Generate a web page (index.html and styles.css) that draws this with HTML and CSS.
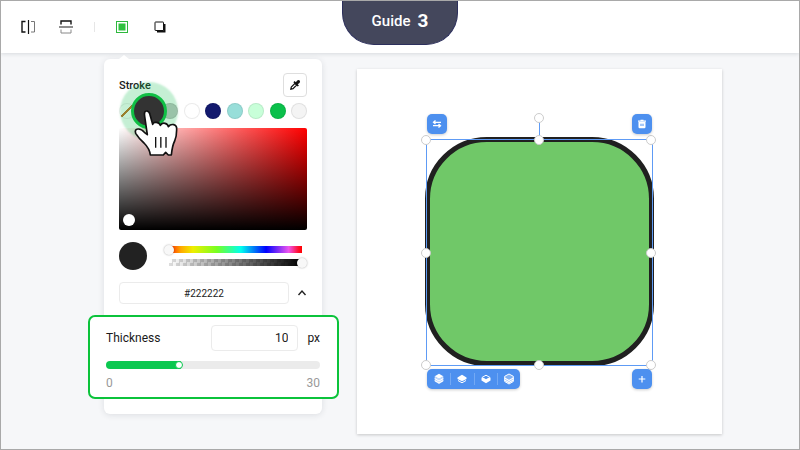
FILE: index.html
```html
<!DOCTYPE html>
<html lang="en">
<head>
<meta charset="utf-8">
<title>Guide 3</title>
<link rel="stylesheet" href="styles.css">
</head>
<body>
<header class="topbar">
  <button class="tool" aria-label="Flip horizontally">
    <svg width="16" height="16" viewBox="0 0 16 16" fill="none" stroke="#333"><path d="M5.500 2.500H2V13H5.500" stroke="#111" stroke-width="1.400"/><path d="M8.500 1V15" stroke="#111" stroke-width="1.200"/><path d="M11 2.500H14.500V13H11" stroke="#777"/></svg>
  </button>
  <button class="tool" aria-label="Flip vertically">
    <svg width="16" height="16" viewBox="0 0 16 16" fill="none"><path d="M3 5.500V2H13V5.500" stroke="#111" stroke-width="1.400"/><path d="M1 8H15" stroke="#444" stroke-width="1.200"/><path d="M3 10.500V14H13V10.500" stroke="#888"/></svg>
  </button>
  <span class="tool-divider"></span>
  <button class="tool" aria-label="Stroke">
    <svg width="16" height="16" viewBox="0 0 16 16"><rect x="2.500" y="2.500" width="11" height="11" fill="#fff" stroke="#2db83d"/><rect x="4.500" y="4.500" width="7" height="7" fill="#2fc13f"/></svg>
  </button>
  <button class="tool" aria-label="Shadow">
    <svg width="16" height="16" viewBox="0 0 16 16"><path d="M5 5H13.500V13.500H5Z" fill="#111"/><rect x="3" y="3" width="8.500" height="8.500" rx=".5" fill="#fff" stroke="#111"/></svg>
  </button>
  <h1 class="guide">Guide <strong>3</strong></h1>
</header>

<main class="workspace">
  <section class="panel">
    <div class="panel-head">
      <h2>Stroke</h2>
      <button class="eyedropper" aria-label="Pick a color">
        <svg width="12" height="12" viewBox="0 0 12 12"><path d="M1.800 10.200L2.300 8L6 4.300L7.700 6L4 9.700Z" fill="#fff" stroke="#111" stroke-width="1.200"/><path d="M5 2.700L9.300 7" stroke="#111" stroke-width="1.700"/><path d="M6.300 4L8.200 1.500Q9.500 .5 10.700 1.400Q11.500 2.600 10.500 3.900L8 5.700Z" fill="#111"/></svg>
      </button>
    </div>
    <div class="swatches">
      <button class="swatch none" aria-label="No color"></button>
      <button class="swatch current" aria-label="Dark gray">
        <svg class="hand" width="45" height="50" viewBox="75 100 135 150"><path d="M107 125Q104 108 114 109Q121 110 123 120L131 149Q132 142 142 143Q152 144 154 152Q158 144 168 146Q177 148 178 156Q184 148 194 150Q204 152 203 165Q203 185 197 199Q190 212 187 241H178L170 233L163 241H124Q122 222 105 205Q90 192 80 176Q76 164 87 163Q97 162 106 173L115 180Z" fill="#fff" stroke="#111" stroke-width="5" stroke-linejoin="round"/><path d="M140 187V219M155.500 187V219M171 187V219" stroke="#111" stroke-width="4"/></svg>
      </button>
      <button class="swatch gray" aria-label="Gray"></button>
      <button class="swatch white" aria-label="White"></button>
      <button class="swatch navy" aria-label="Navy"></button>
      <button class="swatch teal" aria-label="Teal"></button>
      <button class="swatch mint" aria-label="Mint"></button>
      <button class="swatch green" aria-label="Green"></button>
      <button class="swatch light" aria-label="Light gray"></button>
    </div>
    <div class="shade"><button class="shade-knob" aria-label="Shade"></button></div>
    <div class="mixer">
      <span class="preview"></span>
      <div class="ranges">
        <input class="range hue" type="range" min="0" max="360" value="0" aria-label="Hue">
        <input class="range alpha" type="range" min="0" max="100" value="100" aria-label="Opacity">
      </div>
    </div>
    <div class="hex-row">
      <input class="field hex" type="text" value="#222222" aria-label="Hex color">
      <button class="collapse" aria-label="Collapse">
        <svg width="10" height="10" viewBox="0 0 10 10" fill="none" stroke="#222" stroke-width="1.400"><path d="M1.500 7L5 3L8.500 7"/></svg>
      </button>
    </div>
    <div class="thickness">
      <div class="thickness-row">
        <label for="thickness">Thickness</label>
        <input class="field amount" id="thickness" type="text" value="10">
        <span>px</span>
      </div>
      <input class="thickness-range" type="range" min="0" max="30" value="10" aria-label="Thickness slider">
      <div class="limits"><span>0</span><span>30</span></div>
    </div>
  </section>

  <section class="artboard">
    <div class="shape">
      <div class="selection">
        <i class="stem"></i><i class="handle rotate c"></i>
        <i class="handle t l"></i><i class="handle t c"></i><i class="handle t r"></i>
        <i class="handle m l"></i><i class="handle m r"></i>
        <i class="handle b l"></i><i class="handle b c"></i><i class="handle b r"></i>
        <button class="action above start" aria-label="Swap">
          <svg width="10" height="10" viewBox="0 0 10 10" fill="none" stroke="#fff" stroke-width="1.300"><path d="M9 3.300H2M3.500 1.500L1.500 3.300L3.500 5M1 6.700H8M6.500 5L8.500 6.700L6.500 8.500"/></svg>
        </button>
        <button class="action above end" aria-label="Delete">
          <svg width="10" height="10" viewBox="0 0 10 10"><path d="M1 1.500H3.500V.7H6.500V1.500H9V2.700H1ZM1.500 3H8.500V8Q8.500 9.200 7.300 9.200H2.700Q1.500 9.200 1.500 8Z" fill="#fff"/><path d="M4 4.700V7M6 4.700V7" stroke="#4d90ef"/></svg>
        </button>
        <div class="action-bar">
          <button aria-label="Bring to front"><svg width="10" height="12" viewBox="0 0 10 12"><path d="M5 .8L9.300 3.300L5 5.800L.7 3.300Z" fill="#fff"/><path d="M.7 3.300V8.500L5 11L9.300 8.500V3.300L5 5.800Z" fill="#fff" opacity=".65"/><path d="M.7 5.500L5 8L9.300 5.500M.7 7.500L5 10L9.300 7.500" fill="none" stroke="#fff"/></svg></button>
          <button aria-label="Bring forward"><svg width="10" height="12" viewBox="0 0 10 12"><path d="M5 1.800L9.500 4.500V6L5 8.300L.5 6V4.500Z" fill="#fff"/><path d="M1 7.500L5 9.800L9 7.500" fill="none" stroke="#fff"/></svg></button>
          <button aria-label="Send backward"><svg width="10" height="12" viewBox="0 0 10 12"><path d="M1 4.500L5 2.200L9 4.500" fill="none" stroke="#fff"/><path d="M.5 4.500L3 5L5 6.200L7 5L9.500 4.500V7.500L5 10.200L.5 7.500Z" fill="#fff"/></svg></button>
          <button aria-label="Send to back"><svg width="10" height="12" viewBox="0 0 10 12"><path d="M5 1L9.300 3.300V8.500L5 11L.7 8.500V3.300Z" fill="#fff" fill-opacity=".3" stroke="#fff"/><path d="M.7 5L5 7.500L9.300 5M.7 7L5 9.500L9.300 7" fill="none" stroke="#fff" stroke-width="1.200"/></svg></button>
        </div>
        <button class="action below end" aria-label="Add">
          <svg width="10" height="10" viewBox="0 0 10 10"><path d="M5 2V8.500M1.700 5H8.300" stroke="#fff" stroke-width="1.200"/></svg>
        </button>
      </div>
    </div>
  </section>
</main>
</body>
</html>
```
FILE: styles.css
```css
* {
  box-sizing: border-box;
}

body {
  margin: 0;
  min-height: 100vh;
  border: 1px solid #a9a9a9;
  background: #f6f7f9;
  color: #1a1a1a;
  font-family: Roboto, "Liberation Sans", sans-serif;
  font-size: 12px;
}

button {
  display: grid;
  place-items: center;
  padding: 0;
  border: 0;
  background: none;
  cursor: pointer;
}

.topbar {
  position: relative;
  display: flex;
  align-items: center;
  gap: 14px;
  height: 52px;
  padding: 0 15px;
  background: #fff;
  box-shadow: 0 1px 4px rgba(30, 40, 60, 0.14);
}

.tool {
  width: 24px;
  height: 24px;
}

.tool-divider {
  width: 1px;
  height: 10px;
  margin: 0 1px 0 2px;
  background: #e6e6e6;
}

.guide {
  position: absolute;
  top: 0;
  left: 50%;
  display: flex;
  align-items: center;
  justify-content: center;
  gap: 7px;
  width: 116px;
  height: 44px;
  margin: 0 0 0 -58px;
  padding-bottom: 4px;
  border: 1px solid #2c2f5c;
  border-top: 0;
  border-radius: 0 0 32px 32px;
  background: #44475c;
  color: #fff;
  font-size: 15px;
  font-weight: 500;
}

.guide strong {
  font-size: 19px;
  font-weight: 700;
}

.workspace {
  display: flex;
  align-items: flex-start;
  gap: 35px;
  padding: 6px 77px 15px 103px;
}

.panel {
  position: relative;
  flex: 0 0 218px;
  padding: 14px 15px 15px;
  border-radius: 6px;
  background: #fff;
  box-shadow: 0 1px 6px rgba(30, 40, 60, 0.12);
}

.panel::before {
  content: "";
  position: absolute;
  top: -4px;
  left: 15px;
  border: solid transparent;
  border-width: 0 5px 4px;
  border-bottom-color: #fff;
}

.panel-head {
  display: flex;
  align-items: center;
  justify-content: space-between;
}

.panel-head h2 {
  margin: 0;
  font-size: 11px;
  font-weight: 500;
}

.eyedropper {
  width: 24px;
  height: 24px;
  border: 1px solid #dedede;
  border-radius: 4px;
}

.swatches {
  display: flex;
  justify-content: space-between;
  margin: 6px 0 9px;
}

.swatch {
  width: 16px;
  height: 16px;
  border: 1px solid rgba(0, 0, 0, 0.08);
  border-radius: 50%;
}

.none {
  background: linear-gradient(135deg, transparent 46%, #c46a20 46%, #c46a20 54%, transparent 54%);
}

.gray { background: #c4c4c4; }
.white { background: #fff; }
.navy { background: #131a6e; }
.teal { background: #98ded9; }
.mint { background: #c8ffd9; }
.green { background: #0bc04b; }
.light { background: #f4f4f4; }

.current {
  position: relative;
  z-index: 1;
  border: 0;
}

.current::before {
  content: "";
  position: absolute;
  inset: -10px;
  border: 3px solid #10bf45;
  border-radius: 50%;
  background: #333;
  box-shadow: 0 0 2px 11px rgba(30, 195, 90, 0.26);
}

.hand {
  position: absolute;
  top: 5px;
  left: -7px;
}

.shade {
  position: relative;
  height: 102px;
  border-radius: 2px;
  background: linear-gradient(to top, #000, transparent), linear-gradient(to right, #fff, #f00);
}

.shade-knob {
  position: absolute;
  bottom: 4px;
  left: 4px;
  width: 12px;
  height: 12px;
  border-radius: 50%;
  background: #fff;
}

.mixer {
  display: flex;
  align-items: center;
  gap: 17px;
  margin: 12px 0;
}

.preview {
  width: 28px;
  height: 28px;
  border-radius: 50%;
  background: #222;
}

.ranges {
  display: grid;
  flex: 1;
  gap: 3px;
  min-width: 0;
}

.range {
  width: 100%;
  height: 10px;
  margin: 0;
  appearance: none;
  background: no-repeat center / calc(100% - 10px) 7px;
}

.hue {
  background-image: linear-gradient(to right, #f20, #fa0 9%, #ee0 18%, #7f2 36%, #0fe 54%, #00f 73%, #e5e 90%, #f13 97%, #f00);
}

.alpha {
  padding: 0 5px;
  background-image: linear-gradient(to right, rgba(0, 0, 0, 0), #000), repeating-conic-gradient(#ddd 0 25%, #fff 0 50%);
  background-repeat: no-repeat, repeat-x;
  background-position: center;
  background-size: 100% 7px, 7px 7px;
  background-origin: content-box;
  background-clip: content-box;
}

.range::-webkit-slider-thumb {
  width: 10px;
  height: 10px;
  appearance: none;
  border-radius: 50%;
  background: #f8f8f8;
  box-shadow: 0 0 2px rgba(0, 0, 0, 0.35);
}

.alpha::-webkit-slider-runnable-track {
  margin: 0 -5px;
}

.field {
  min-width: 0;
  border: 1px solid #ebebeb;
  border-radius: 4px;
  background: #fff;
  color: #222;
  font-family: inherit;
}

.hex-row {
  display: flex;
  align-items: center;
  gap: 8px;
  margin-bottom: 11px;
}

.hex {
  flex: 1;
  height: 22px;
  font-size: 10px;
  text-align: center;
}

.collapse {
  width: 10px;
  height: 10px;
}

.thickness {
  margin: 0 -32px 0 -31px;
  padding: 8px 17px 7px 16px;
  border: 2px solid #0bc33b;
  border-radius: 7px;
  background: #fff;
  font-size: 12px;
}

.thickness-row {
  display: flex;
  align-items: center;
  gap: 9px;
}

.thickness-row label {
  flex: 1;
}

.amount {
  width: 87px;
  height: 26px;
  padding: 0 9px;
  font-size: 12px;
  text-align: right;
}

.thickness-range {
  display: block;
  width: 100%;
  height: 8px;
  margin: 10px 0 7px;
  appearance: none;
  border-radius: 4px;
  background: linear-gradient(to right, #0bc850 35%, #ebebeb 35%);
}

.thickness-range::-webkit-slider-thumb {
  width: 8px;
  height: 8px;
  appearance: none;
  border: 1px solid #0bc850;
  border-radius: 50%;
  background: #fff;
}

.limits {
  display: flex;
  justify-content: space-between;
  color: #999;
  line-height: 14px;
}

.artboard {
  flex: 1;
  min-width: 0;
  margin-top: 10px;
  padding: 68px;
  background: #fff;
  box-shadow: 0 1px 3px rgba(0, 0, 0, 0.2);
}

.shape {
  position: relative;
  aspect-ratio: 1;
  border: 5px solid #202020;
  border-radius: 27%;
  background: #70c868;
}

.selection {
  position: absolute;
  inset: -3px -4px -5px;
  border: 1px solid #5e9bf5;
}

.handle {
  position: absolute;
  width: 10px;
  height: 10px;
  margin: -5px 0 0 -6px;
  border: 1px solid #ccc;
  border-radius: 50%;
  background: #fff;
}

.t { top: 0; }
.m { top: 50%; }
.b { top: 100%; }
.l { left: 0; }
.c { left: 50%; }
.r { left: 100%; }

.rotate {
  top: -22px;
}

.stem {
  position: absolute;
  top: -18px;
  left: 50%;
  width: 1px;
  height: 18px;
  margin-left: -1px;
  background: #5e9bf5;
}

.action,
.action-bar {
  position: absolute;
  height: 20px;
  border-radius: 5px;
  background: #4d90ef;
  box-shadow: 0 1px 3px rgba(0, 0, 0, 0.2);
}

.action {
  width: 20px;
}

.above { top: -26px; }
.start { left: 0; }
.end { right: 0; }

.below,
.action-bar {
  top: calc(100% + 4px);
}

.action-bar {
  left: 0;
  display: grid;
  grid-template-columns: repeat(4, 1fr);
  align-items: center;
  width: 93px;
}

.action-bar button + button {
  border-left: 1px solid #73a9f4;
}
```
